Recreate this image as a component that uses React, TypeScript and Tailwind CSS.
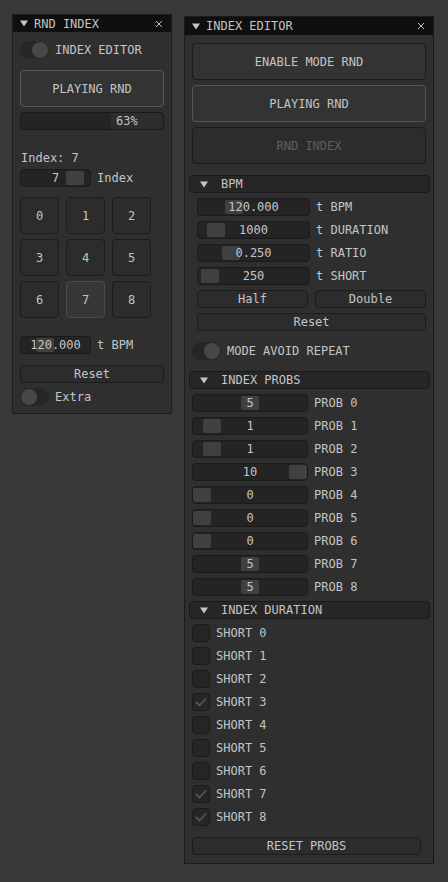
import React from 'react';

const font = { fontFamily: '"DejaVu Sans Mono", "Liberation Mono", monospace' };

function Toggle({ on }: { on?: boolean }) {
  return (
    <div className="w-[29px] h-[18px] rounded-full bg-[#262626] flex items-center px-[1px] shrink-0">
      <div className={`w-[16px] h-[16px] rounded-full bg-[#474747] ${on ? 'ml-auto' : ''}`} />
    </div>
  );
}

function Triangle() {
  return (
    <svg width="8" height="7" viewBox="0 0 8 7" className="shrink-0">
      <path d="M0 0.5 L8 0.5 L4 6.5 Z" fill="#c4c4c4" />
    </svg>
  );
}

function Close() {
  return (
    <svg width="8" height="8" viewBox="0 0 8 8">
      <path d="M1 1 L7 7 M7 1 L1 7" stroke="#c4c4c4" strokeWidth="1" />
    </svg>
  );
}

function TitleBar({ title, h }: { title: string; h: string }) {
  return (
    <div className={`${h} bg-[#0f0f0f] flex items-center pl-[7px] pr-[8px] gap-[6px]`}>
      <Triangle />
      <span className="leading-none">{title}</span>
      <span className="ml-auto flex items-center"><Close /></span>
    </div>
  );
}

function Slider({ value, grab, w }: { value: string; grab: number; w: string }) {
  return (
    <div className={`relative ${w} h-[18px] rounded-[4px] bg-[#242424] border border-[#1a1a1a] flex items-center justify-center shrink-0`}>
      <div className="absolute top-[1px] w-[18px] h-[14px] rounded-[2px] bg-[#404040]" style={{ left: grab }} />
      <span className="relative leading-none">{value}</span>
    </div>
  );
}

function Header({ title }: { title: string }) {
  return (
    <div className="-ml-[3px] -mr-[4px] h-[18px] rounded-[4px] bg-[#262626] border border-[#1a1a1a] flex items-center pl-[10px] gap-[13px]">
      <Triangle />
      <span className="leading-none">{title}</span>
    </div>
  );
}

function Check({ on }: { on?: boolean }) {
  return (
    <div className="w-[18px] h-[18px] rounded-[4px] bg-[#262626] border border-[#1a1a1a] flex items-center justify-center shrink-0">
      {on && (
        <svg width="12" height="10" viewBox="0 0 12 10">
          <path d="M1 5 L4.5 8.5 L11 1.5" stroke="#555555" strokeWidth="1.8" fill="none" />
        </svg>
      )}
    </div>
  );
}

export default function App() {
  const bpmRows = [
    { v: '120.000', g: 27, l: 't BPM' },
    { v: '1000', g: 9, l: 't DURATION' },
    { v: '0.250', g: 24, l: 't RATIO' },
    { v: '250', g: 3, l: 't SHORT' },
  ];
  const probs = [5, 1, 1, 10, 0, 0, 0, 5, 5];
  const shorts = [false, false, false, true, false, false, false, true, true];

  return (
    <div className="w-[448px] h-[882px] bg-[#383838] flex items-start text-[12px] text-[#c4c4c4] overflow-hidden" style={font}>
      {/* RND INDEX */}
      <div className="ml-[12px] mt-[14px] w-[160px] h-[400px] bg-[#2f2f2f] border border-[#1b1b1b] flex flex-col">
        <TitleBar title="RND INDEX" h="h-[17px]" />
        <div className="px-[7px] flex flex-col">
          <div className="mt-[9px] flex items-center gap-[6px]">
            <Toggle on />
            <span className="leading-none">INDEX EDITOR</span>
          </div>
          <div className="mt-[11px] h-[37px] rounded-[4px] bg-[#333333] border border-[#575757] flex items-center justify-center">PLAYING RND</div>
          <div className="mt-[5px] h-[18px] rounded-[4px] bg-[#2d2d2d] border border-[#1a1a1a] flex items-center overflow-hidden">
            <div className="w-[90px] h-full bg-[#242424]" />
            <span className="ml-[5px] leading-none">63%</span>
          </div>
          <div className="mt-[21px] h-[14px] flex items-center pl-[1px]">Index: 7</div>
          <div className="mt-[4px] flex items-center gap-[6px]">
            <Slider value="7" grab={45} w="w-[71px]" />
            <span className="leading-none">Index</span>
          </div>
          <div className="mt-[10px] grid grid-cols-3 w-[131px] gap-x-[7px] gap-y-[5px]">
            {[0, 1, 2, 3, 4, 5, 6, 7, 8].map((n) => (
              <div
                key={n}
                className={`h-[37px] rounded-[4px] flex items-center justify-center border ${n === 7 ? 'bg-[#373737] border-[#4a4a4a]' : 'bg-[#2c2c2c] border-[#1c1c1c]'}`}
              >
                {n}
              </div>
            ))}
          </div>
          <div className="mt-[18px] flex items-center gap-[6px]">
            <Slider value="120.000" grab={15} w="w-[71px]" />
            <span className="leading-none">t BPM</span>
          </div>
          <div className="mt-[11px] h-[18px] rounded-[4px] bg-[#2c2c2c] border border-[#1c1c1c] flex items-center justify-center">Reset</div>
          <div className="mt-[5px] flex items-center gap-[6px]">
            <Toggle />
            <span className="leading-none">Extra</span>
          </div>
        </div>
      </div>

      {/* INDEX EDITOR */}
      <div className="ml-[12px] mt-[16px] w-[250px] h-[848px] bg-[#2f2f2f] border border-[#1b1b1b] flex flex-col">
        <TitleBar title="INDEX EDITOR" h="h-[18px]" />
        <div className="pl-[7px] pr-[7px] flex flex-col">
          <div className="mt-[8px] h-[37px] rounded-[4px] bg-[#333333] border border-[#1c1c1c] flex items-center justify-center">ENABLE MODE RND</div>
          <div className="mt-[5px] h-[37px] rounded-[4px] bg-[#333333] border border-[#575757] flex items-center justify-center">PLAYING RND</div>
          <div className="mt-[5px] h-[37px] rounded-[4px] bg-[#2c2c2c] border border-[#1c1c1c] flex items-center justify-center text-[#5f5f5f]">RND INDEX</div>

          <div className="mt-[11px]"><Header title="BPM" /></div>
          <div className="pl-[5px] flex flex-col">
            {bpmRows.map((r, i) => (
              <div key={i} className="mt-[5px] flex items-center gap-[6px]">
                <Slider value={r.v} grab={r.g} w="w-[113px]" />
                <span className="leading-none">{r.l}</span>
              </div>
            ))}
            <div className="mt-[5px] flex gap-[7px]">
              <div className="w-[111px] h-[18px] rounded-[4px] bg-[#2c2c2c] border border-[#1c1c1c] flex items-center justify-center">Half</div>
              <div className="w-[111px] h-[18px] rounded-[4px] bg-[#2c2c2c] border border-[#1c1c1c] flex items-center justify-center">Double</div>
            </div>
            <div className="mt-[5px] h-[18px] rounded-[4px] bg-[#2c2c2c] border border-[#1c1c1c] flex items-center justify-center">Reset</div>
          </div>

          <div className="mt-[11px] flex items-center gap-[6px]">
            <Toggle on />
            <span className="leading-none">MODE AVOID REPEAT</span>
          </div>

          <div className="mt-[11px]"><Header title="INDEX PROBS" /></div>
          {probs.map((p, i) => (
            <div key={i} className="mt-[5px] flex items-center gap-[6px]">
              <Slider value={String(p)} grab={Math.round(p * 9.6)} w="w-[116px]" />
              <span className="leading-none">PROB {i}</span>
            </div>
          ))}

          <div className="mt-[5px]"><Header title="INDEX DURATION" /></div>
          {shorts.map((s, i) => (
            <div key={i} className="mt-[5px] flex items-center gap-[6px]">
              <Check on={s} />
              <span className="leading-none">SHORT {i}</span>
            </div>
          ))}

          <div className="mt-[11px] w-[229px] h-[18px] rounded-[4px] bg-[#2c2c2c] border border-[#1c1c1c] flex items-center justify-center">RESET PROBS</div>
        </div>
      </div>
    </div>
  );
}
